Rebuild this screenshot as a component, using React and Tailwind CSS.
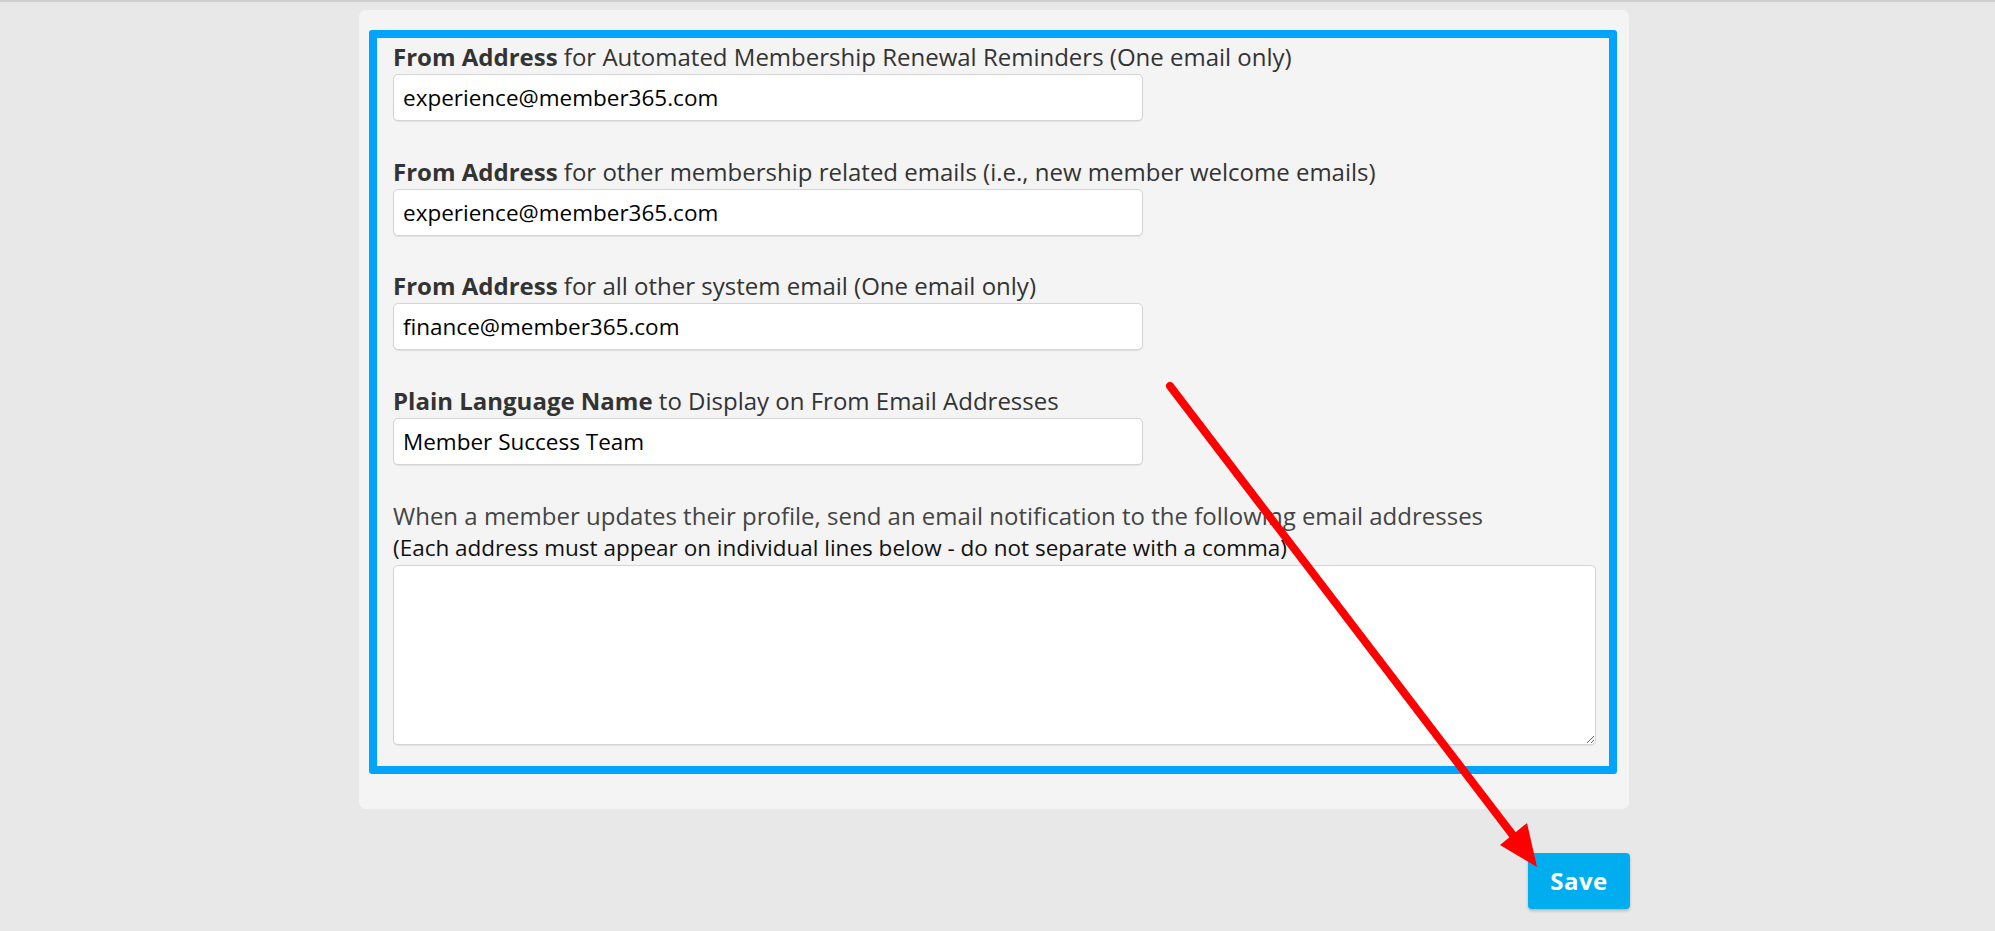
import React from 'react';

const fields = [
  {
    bold: 'From Address',
    rest: ' for Automated Membership Renewal Reminders (One email only)',
    value: 'experience@member365.com',
  },
  {
    bold: 'From Address',
    rest: ' for other membership related emails (i.e., new member welcome emails)',
    value: 'experience@member365.com',
  },
  {
    bold: 'From Address',
    rest: ' for all other system email (One email only)',
    value: 'finance@member365.com',
  },
  {
    bold: 'Plain Language Name',
    rest: ' to Display on From Email Addresses',
    value: 'Member Success Team',
  },
];

const Field = ({ bold, rest, value }) => (
  <div className="mb-[35.5px]">
    <label className="block text-[24px] leading-[30px] text-[#333] mb-[2px]">
      <b className="font-bold">{bold}</b>
      {rest}
    </label>
    <input
      defaultValue={value}
      className="w-[750px] h-[47px] px-[9px] bg-white border border-[#d4d4d4] rounded-[5px] shadow-[0_1px_1px_rgba(0,0,0,0.08)] text-[22.5px] text-black outline-none"
    />
  </div>
);

const App = () => {
  return (
    <div
      className="relative min-h-[931px] bg-[#e8e8e8] border-t-2 border-[#cfcfcf] overflow-hidden"
      style={{ fontFamily: '"Open Sans", "Liberation Sans", sans-serif' }}
    >
      <div className="ml-[359px] mt-[8px] w-[1270px] bg-[#f4f4f4] rounded-[7px] pt-[20px] pl-[10px] pr-[12px] pb-[35px]">
        <div className="border-[8px] border-[#00a4ff] rounded-[3px] pt-[4px] pl-[16px] pr-[13px] pb-[21px]">
          {fields.map((f, i) => (
            <Field key={i} {...f} />
          ))}

          <div className="text-[24px] leading-[32px] text-[#444]">
            When a member updates their profile, send an email notification to the following email addresses
          </div>
          <div className="text-[22.5px] leading-[32px] text-[#111] mb-[1px]">
            (Each address must appear on individual lines below - do not separate with a comma)
          </div>
          <textarea className="block w-full h-[180px] bg-white border border-[#d4d4d4] rounded-[5px] shadow-[0_1px_1px_rgba(0,0,0,0.08)] outline-none resize-y" />
        </div>
      </div>

      <div className="flex justify-end w-[1630px] mt-[44px]">
        <button className="w-[102px] h-[56px] bg-[#00aeef] rounded-[4px] text-white text-[24px] font-bold tracking-[0.5px] shadow-[0_2px_3px_rgba(0,0,0,0.2)]">
          Save
        </button>
      </div>

      {/* red annotation arrow */}
      <svg className="absolute left-0 top-0 pointer-events-none" width="1995" height="931">
        <line x1="1170" y1="384" x2="1515" y2="836" stroke="#ff0000" strokeWidth="8" strokeLinecap="round" />
        <polygon points="1500,843 1527,821 1537,865" fill="#ff0000" />
      </svg>
    </div>
  );
};

export default App;
